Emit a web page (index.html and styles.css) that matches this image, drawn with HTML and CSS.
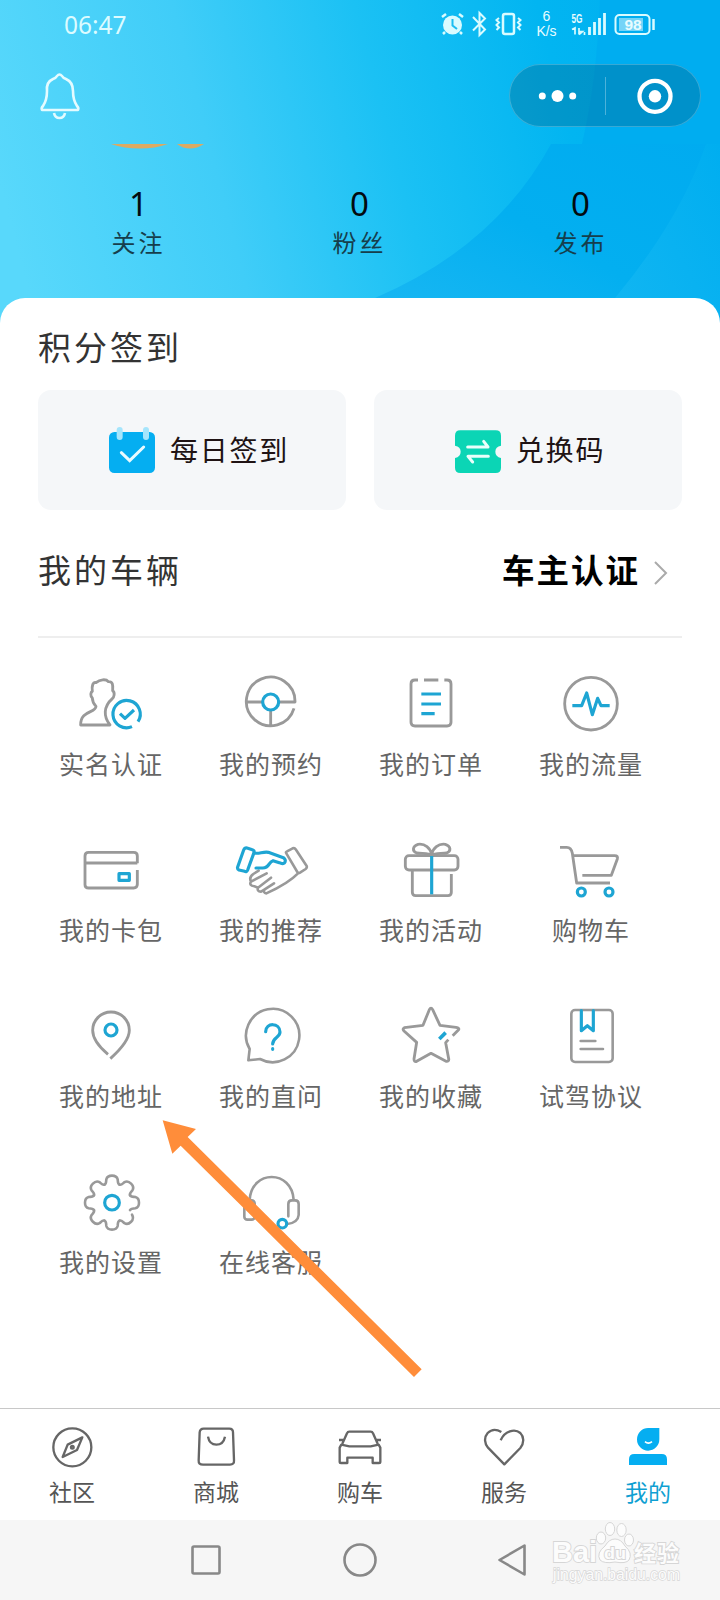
FILE: index.html
```html
<!DOCTYPE html>
<html lang="zh-CN">
<head>
<meta charset="utf-8">
<title>我的</title>
<link rel="stylesheet" href="styles.css">
</head>
<body>
<div class="screen">
  <header class="hero">
    <svg class="hero-bg" viewBox="0 0 720 330">
      <defs>
        <linearGradient id="sky" x1="0" y1="0.56" x2="1" y2="0.44">
          <stop offset="0" stop-color="#58d8fb"/><stop offset=".3" stop-color="#40cdf8"/><stop offset=".55" stop-color="#1bc1f4"/><stop offset=".8" stop-color="#02b5f1"/><stop offset="1" stop-color="#00aef0"/>
        </linearGradient>
        <linearGradient id="deep" x1="0" y1="1" x2="1" y2="0">
          <stop offset="0" stop-color="#1cb8f3"/><stop offset=".5" stop-color="#03aff0"/><stop offset="1" stop-color="#00abf0"/>
        </linearGradient>
        <linearGradient id="edge" x1="0" y1="1" x2="1" y2="0">
          <stop offset="0" stop-color="#12b6f2"/><stop offset="1" stop-color="#00aef0"/>
        </linearGradient>
      </defs>
      <rect width="720" height="330" fill="url(#sky)"/>
      <path d="M600 0Q597 80 582 144H720V0Z" fill="#00adf0"/>
      <path d="M551 144Q496 246 375 298V330H720V144Z" fill="url(#deep)"/>
      <path d="M706 144Q680 220 615 298V330H720V144Z" fill="url(#edge)"/>
      <path d="M111 144H168Q155 148.500 140 148.500Q124 148.500 111 144ZM177 144H204Q197 148.500 190 148.500Q183 148.500 177 144Z" fill="#dcaa62"/>
    </svg>
    <div class="status">
      <span class="clock">06:47</span>
      <svg class="status-icons" viewBox="436 0 224 48" fill="none" stroke="#d9fbff" stroke-width="2">
        <circle cx="452.500" cy="25" r="9.500" fill="#d9fbff" stroke="none"/>
        <path d="M445 32L443 34M460 32L462 34M442 17L446 14M459 14L463 17" stroke-width="2.500"/>
        <path d="M452.500 19V25.500L457 29" stroke="#1bbdf2"/>
        <path d="M473 17L485 29.500L479.500 35V13L485 18.500L473 30.500"/>
        <rect x="503" y="14" width="11" height="20" rx="2" stroke-width="2.500"/>
        <path d="M499 18L496.500 20L499 22.500L496.500 25L499 27.500L496.500 30M518 18L520.500 20L518 22.500L520.500 25L518 27.500L520.500 30"/>
        <path d="M572 29.500L575 28V34.500M579 28V34.500M579 34.500L582.500 31.500H579M584.500 32V35" stroke-width="1.700"/>
        <path d="M589.500 27V35M594.500 22V35M599.500 18V35M604.500 13V35" stroke-width="2.800"/>
        <rect x="615.500" y="15" width="34" height="19" rx="4"/>
        <rect x="619" y="18" width="24" height="13" fill="#75d4f7" stroke="none"/>
        <path d="M653.500 19V30" stroke-width="2.500"/>
        <g class="status-text" stroke="none" fill="#e8fcff">
          <text x="546.500" y="21" font-size="14">6</text>
          <text x="546.500" y="36" font-size="14">K/s</text>
          <text x="577" y="23" font-size="12" textLength="11" lengthAdjust="spacingAndGlyphs" font-weight="700">5G</text>
          <text x="633" y="30" font-size="15.500" font-weight="700">98</text>
        </g>
      </svg>
    </div>
    <div class="topbar">
      <svg class="bell" viewBox="36 70 48 52" fill="none" stroke="#e4fbff" stroke-width="2.600" stroke-linejoin="round">
        <path d="M42 110Q41 108 43 106Q47 100 47 91Q46 82 53 79Q56 78 57 76Q59.500 73 62 76Q63 78 66 79Q73 82 73 91Q73 100 77 106Q79 108 78 110Z"/>
        <path d="M54 113Q55 118 59.500 118Q64 118 65 113"/>
      </svg>
      <div class="capsule">
        <svg viewBox="509 64 192 63" fill="#fff">
          <circle cx="542.300" cy="96" r="3.500"/><circle cx="557.500" cy="96" r="6"/><circle cx="572.700" cy="96" r="3.500"/>
          <path d="M605.500 77V115" stroke="#fff" stroke-opacity=".3"/>
          <circle cx="655" cy="96.300" r="15.500" fill="none" stroke="#fff" stroke-width="4.300"/><circle cx="655" cy="96.300" r="6.200"/>
        </svg>
      </div>
    </div>
    <div class="stats">
      <div class="stat"><b class="stat-num">1</b><span class="stat-label">关注</span></div>
      <div class="stat"><b class="stat-num">0</b><span class="stat-label">粉丝</span></div>
      <div class="stat"><b class="stat-num">0</b><span class="stat-label">发布</span></div>
    </div>
  </header>

  <main class="sheet">
    <h2 class="title title-points">积分签到</h2>
    <div class="cards">
      <div class="card card-sign">
        <svg class="card-icon" viewBox="327 381 138 138">
          <rect x="327" y="396" width="138" height="123" rx="16" fill="#05aef1"/>
          <rect x="350" y="381" width="18" height="39" rx="9" fill="#a5e5fc"/><rect x="429" y="381" width="18" height="39" rx="9" fill="#a5e5fc"/>
          <path d="M364 458L389 482L431 441" fill="none" stroke="#e9fbff" stroke-width="9" stroke-linecap="round"/>
        </svg>
        <span>每日签到</span>
      </div>
      <div class="card">
        <svg class="card-icon" viewBox="285 381 138 138">
          <path d="M301 391H407Q423 391 423 407V437Q406 440 406 455Q406 470 423 474V503Q423 519 407 519H301Q285 519 285 503V474Q302 470 302 455Q302 440 285 437V407Q285 391 301 391Z" fill="#0bd5b5"/>
          <path d="M323 441H384L371 424M385 469H324L338 486" fill="none" stroke="#e9fffb" stroke-width="9" stroke-linecap="round" stroke-linejoin="round"/>
        </svg>
        <span>兑换码</span>
      </div>
    </div>
    <div class="vehicle">
      <h2 class="title">我的车辆</h2>
      <div class="verify"><span>车主认证</span>
        <svg class="chevron" viewBox="652 558 18 30"><path d="M655 562L666 573L655 584" fill="none" stroke="#aaa" stroke-width="2"/></svg>
      </div>
    </div>
    <div class="menu">
      <div class="item"><svg class="icon" viewBox="93 21 240 216"><path d="M210 195H122C121 150 168 160 168 139C158 128 157 120 157 114C150 107 152 97 157 94C155 76 159 65 168 68C180 58 198 56 205 65C221 64 218 80 218 92C226 98 222 112 217 116C190 140 190 170 210 195Z"/><path class="blue" d="M276 200A41 41 0 1 1 294 185M240 161L255 175L282 150"/></svg><span>实名认证</span></div>
      <div class="item"><svg class="icon" viewBox="573 21 240 216"><path d="M619 126H667M717 126H765A73 73 0 1 0 762 145M692 152V199"/><circle class="blue" cx="692" cy="126" r="24"/></svg><span>我的预约</span></div>
      <div class="item"><svg class="icon" viewBox="93 21 240 216"><path d="M174 60H165Q153 60 153 72V187Q153 198 165 198H261Q273 198 273 187V72Q273 60 261 60H253M192 60H235"/><path class="blue" d="M184 102H243M184 132H243M184 161H224"/></svg><span>我的订单</span></div>
      <div class="item"><svg class="icon" viewBox="573 21 240 216"><circle cx="693" cy="131" r="79"/><path class="blue" d="M637 137H665L680 99L697 164L713 115L723 137H749"/></svg><span>我的流量</span></div>

      <div class="item"><svg class="icon" viewBox="93 39 240 216"><path d="M292 130V108Q292 97 281 97H146Q135 97 135 108V194Q135 204 146 204H281Q292 204 292 193V150M135 129H292"/><rect class="blue" x="237" y="161" width="31" height="20"/></svg><span>我的卡包</span></div>
      <div class="item"><svg class="icon thin" viewBox="573 39 240 216"><path d="M739 100Q736 96 741 94L758 85Q764 83 767 88L800 138Q802 143 797 147L780 158Q775 161 772 156ZM774 160C750 185 710 206 679 220Q669 219 673 209L702 190M673 209L663 215Q650 214 654 203L693 173M654 203L643 199Q626 196 633 185L680 160M633 185Q626 172 640 162L656 152"/><path class="blue" d="M621 84L637 89Q644 91 642 98L623 150Q620 157 614 154L597 150Q591 147 593 141L611 90Q614 83 621 84ZM643 99C655 103 670 94 685 97L730 113Q740 120 733 129Q727 133 718 128L699 122C684 126 690 144 668 144H648"/></svg><span>我的推荐</span></div>
      <div class="item"><svg class="icon" viewBox="93 39 240 216"><rect x="136" y="107" width="158" height="43" rx="11"/><path d="M157 150V217Q157 227 167 227H264Q274 227 274 217V162M215 103C211 84 195 70 174 73C157 78 156 94 170 99C187 102 205 97 215 107C225 97 243 102 260 99C274 94 273 78 256 73C235 70 219 84 215 103"/><path class="blue" d="M215 108V223"/></svg><span>我的活动</span></div>
      <div class="item"><svg class="icon" viewBox="573 39 240 216"><path d="M600 82H620Q634 82 637 100L650 189H750M640 107H764Q775 107 772 117L754 166H667"/><circle class="blue" cx="664" cy="216" r="12"/><circle class="blue" cx="747" cy="216" r="12"/></svg><span>购物车</span></div>

      <div class="item"><svg class="icon" viewBox="93 537 240 216"><path d="M204 703Q158 665 158 631A55 55 0 0 1 268 631Q268 665 211 716"/><circle class="blue" cx="213" cy="630" r="18"/></svg><span>我的地址</span></div>
      <div class="item"><svg class="icon thin" viewBox="573 537 240 216"><path d="M660 717A80 80 0 1 0 629 687L625 721Z"/><path class="blue" d="M677 635C677 607 720 607 720 636C720 653 698 652 698 672M698 686V688"/></svg><span>我的直问</span></div>
      <div class="item"><svg class="icon" viewBox="93 537 240 216"><path d="M278 647L295 630Q300 624 288 622L240 616L218 569Q213 560 208 569L189 616L133 623Q126 627 132 633L170 667L162 717Q162 727 170 724L213 700L258 724Q268 725 266 716L257 668L265 659"/><path class="blue bold" d="M238 657L257 638"/></svg><span>我的收藏</span></div>
      <div class="item"><svg class="icon thin" viewBox="573 537 240 216"><rect x="634" y="570" width="124" height="156" rx="11"/><path d="M662 663H706M662 687H729"/><path class="blue" d="M664 572V632L682 617L700 632V572"/></svg><span>试驾协议</span></div>

      <div class="item"><svg class="icon thin" viewBox="93 165 240 216">
        <defs><path id="tooth" d="M-22.500 -54C-16 -57 -18 -65 -17 -70Q-14 -81 0 -81Q14 -81 17 -70C18 -65 16 -57 22.500 -54"/></defs>
        <g transform="translate(216 278)"><use href="#tooth"/><use href="#tooth" transform="rotate(45)"/><use href="#tooth" transform="rotate(90)"/><path transform="rotate(135)" d="M-17 -68Q-14 -81 0 -81Q14 -81 17 -70C18 -65 16 -57 22.500 -54"/><use href="#tooth" transform="rotate(180)"/><use href="#tooth" transform="rotate(225)"/><use href="#tooth" transform="rotate(270)"/><use href="#tooth" transform="rotate(315)"/></g>
        <circle class="blue" cx="216" cy="278" r="22"/></svg><span>我的设置</span></div>
      <div class="item"><svg class="icon thin" viewBox="573 165 240 216"><path d="M629 270C634 178 756 178 761 270M745 319V282Q745 271 756 271H765Q776 271 776 282V315Q774 338 742 342"/><rect x="613" y="271" width="31" height="58" rx="9"/><circle class="blue" cx="727" cy="341" r="13"/></svg><span>在线客服</span></div>
    </div>
    <svg class="pointer" viewBox="360 20 800 790"><path d="M368 30L468 56L443 80L1145 777L1122 800L422 106L397 130Z" fill="#ff8d3a"/></svg>
  </main>

  <nav class="tabs">
    <div class="tab"><svg class="tab-icon" viewBox="144 69 144 144"><circle cx="217" cy="142" r="57"/><path d="M247 112L203 134L188 171L231 150Z"/><circle cx="217" cy="142" r="4"/></svg><span>社区</span></div>
    <div class="tab"><svg class="tab-icon" viewBox="576 69 144 144"><path d="M611 86H688Q699 86 699 97L702 181Q703 194 690 194H609Q595 194 596 181L599 97Q600 86 611 86ZM624 110Q628 134 649 134Q670 134 675 110"/></svg><span>商城</span></div>
    <div class="tab"><svg class="tab-icon" viewBox="1008 69 144 144"><path d="M1027 131L1041 100Q1043 95 1048 95H1112Q1117 95 1119 100L1133 131M1017 120H1030M1130 120H1143M1024 134L1048 139H1112L1136 134L1141 143V185Q1141 189 1137 189H1118V173H1042V189H1023Q1019 189 1019 185V143Z"/></svg><span>购车</span></div>
    <div class="tab"><svg class="tab-icon" viewBox="360 69 144 144"><path d="M424 96C406 85 391 91 383 99C371 113 374 131 384 143L433 193L481 144C494 128 491 109 481 99C464 85 434 93 422 121"/></svg><span>服务</span></div>
    <div class="tab active"><svg class="tab-icon filled" viewBox="792 69 144 144"><path d="M865 84H898V118A33.500 34 0 1 1 865 84ZM807 195V178Q807 162 823 162H905Q921 162 921 178V195Z"/><path class="smile" d="M855 125Q865 134 876 125"/></svg><span>我的</span></div>
  </nav>

  <footer class="sysnav">
    <svg viewBox="186 1540 40 40"><rect x="192.500" y="1546.500" width="27" height="27" rx="1.500"/></svg>
    <svg viewBox="340 1540 40 40"><circle cx="360" cy="1560" r="15.500"/></svg>
    <svg viewBox="494 1540 40 40"><path d="M499.500 1560L524.500 1545.500V1574.500Z"/></svg>
    <div class="mark">
      <svg viewBox="548 1518 136 68" fill="#fcfcfc" stroke="#d6d6d6" stroke-width="1.800">
        <g class="mark-text">
          <text x="552" y="1562" font-size="29" font-weight="700" textLength="45" lengthAdjust="spacingAndGlyphs">Bai</text>
          <text class="cjk" x="634" y="1561" font-size="22" font-weight="700" textLength="45">经验</text>
          <text x="553" y="1580" font-size="16" stroke-width="1.400" textLength="127" lengthAdjust="spacingAndGlyphs">jingyan.baidu.com</text>
        </g>
        <g stroke-width="1">
        <ellipse cx="601" cy="1538" rx="4.700" ry="6"/><ellipse cx="610" cy="1529" rx="4.700" ry="6.500"/><ellipse cx="621.500" cy="1530" rx="4.700" ry="6.500"/><ellipse cx="629" cy="1540" rx="4.500" ry="6"/>
        <path d="M615 1539Q621 1539 625 1546Q633 1553 629 1560Q626 1564 615 1562Q604 1564 600 1560Q596 1553 605 1546Q609 1539 615 1539Z"/>
        </g>
        <text class="mark-text" x="604" y="1559" font-size="17" font-weight="700" textLength="22" lengthAdjust="spacingAndGlyphs">du</text>
      </svg>
    </div>
  </footer>
</div>
</body>
</html>
```
FILE: styles.css
```css
* { box-sizing: border-box; }
body {
  margin: 0;
  font-family: "Noto Sans", "Noto Sans CJK SC", sans-serif;
  background: #fff;
}
svg { display: block; }
.screen { width: 720px; height: 1600px; display: flex; flex-direction: column; overflow: hidden; }

.hero { position: relative; height: 298px; flex: none; }
.hero-bg { position: absolute; left: 0; top: 0; width: 720px; height: 330px; }
.status, .topbar, .stats { position: relative; display: flex; }
.status { height: 48px; padding: 0 60px 0 64px; justify-content: space-between; align-items: center; }
.clock { color: #dcfbff; font-size: 24.500px; line-height: 34px; padding-top: 1px; }
.status-icons { width: 224px; height: 48px; }
.status-text { font-family: "Liberation Sans", sans-serif; text-anchor: middle; }
.topbar { height: 96px; padding: 16px 19px 0 36px; justify-content: space-between; align-items: flex-start; }
.bell { width: 48px; height: 52px; margin-top: 6px; }
.capsule {
  width: 192px; height: 63px; border-radius: 32px;
  background: rgba(0, 70, 100, .27);
  box-shadow: inset 0 0 0 1px rgba(255, 255, 255, .22);
}
.stats { padding: 36px 28px 0; }
.stat { width: 221px; display: flex; flex-direction: column; align-items: center; }
.stat-num { font-size: 33px; line-height: 48px; font-weight: 400; color: #030b10; }
.stat-label { font-family: "Noto Sans CJK SC", sans-serif; font-size: 24px; line-height: 32px; letter-spacing: 3px; margin: -2px 0 0; color: #163e4c; }

.sheet {
  position: relative; flex: 1; padding: 0 38px;
  background: #fff; border-radius: 25px 25px 0 0;
  font-family: "Noto Sans CJK SC", sans-serif;
}
.title { margin: 0; font-size: 33px; line-height: 48px; font-weight: 400; letter-spacing: 3px; color: #333; }
.title-points { height: 92px; padding-top: 24px; }
.cards { display: grid; grid-template-columns: 308px 308px; gap: 28px; }
.card {
  height: 120px; border-radius: 13px; background: #f5f7f9;
  display: flex; align-items: center; justify-content: center; gap: 15px;
  padding-left: 4px;
  font-size: 28px; letter-spacing: 1.800px; color: #201314;
}
.card span { margin-top: -3px; }
.card-sign { padding-left: 14px; }
.card-icon { width: 46px; height: 46px; }
.vehicle { height: 128px; padding-bottom: 9px; border-bottom: 2px solid #eee; display: flex; align-items: center; justify-content: space-between; }
.verify { display: flex; align-items: center; gap: 12px; padding-right: 12px; font-size: 32.500px; font-weight: 700; letter-spacing: 2px; color: #000; }
.chevron { width: 18px; height: 30px; margin-top: 8px; }

.menu { display: grid; grid-template-columns: repeat(4, 160px); grid-auto-rows: 166px; margin: 29px 0 0 -7px; }
.item { display: flex; flex-direction: column; align-items: center; gap: 6px; font-size: 25px; line-height: 36px; letter-spacing: 1px; color: #666; }
.icon { width: 80px; height: 72px; fill: none; stroke: #999; stroke-width: 8.500; stroke-linejoin: round; }
.thin { stroke-width: 7.800; stroke-linecap: round; }
.blue { stroke: #1ea5d3; stroke-width: 9.500; }
.bold { stroke-width: 11; }
.pointer { position: absolute; left: 160px; top: 819px; width: 266.667px; height: 263.333px; }

.tabs { height: 112px; flex: none; display: grid; grid-template-columns: repeat(5, 144px); border-top: 1px solid #c8c8c8; background: #fff; }
.tab { display: flex; flex-direction: column; align-items: center; gap: 3px; padding-top: 14px; font: 23px/34px "Noto Sans CJK SC", sans-serif; color: #555; }
.tab-icon { width: 48px; height: 48px; fill: none; stroke: #666; stroke-width: 7; stroke-linejoin: round; }
.active { color: #0f9fd2; }
.filled { fill: #05aef1; stroke: none; }
.smile { fill: none; stroke: #fff; stroke-width: 5; }

.sysnav { position: relative; height: 80px; flex: none; background: #f6f6f6; display: flex; justify-content: center; align-items: center; gap: 114px; }
.sysnav > svg { width: 40px; height: 40px; fill: none; stroke: #888; stroke-width: 2.600; stroke-linejoin: round; }
.mark { position: absolute; left: 548px; top: -2px; width: 136px; height: 68px; }
.mark svg { overflow: visible; }
.mark-text { font-family: "Liberation Sans", sans-serif; paint-order: stroke; }
.mark-text .cjk { font-family: "Noto Sans CJK SC", sans-serif; }
```
